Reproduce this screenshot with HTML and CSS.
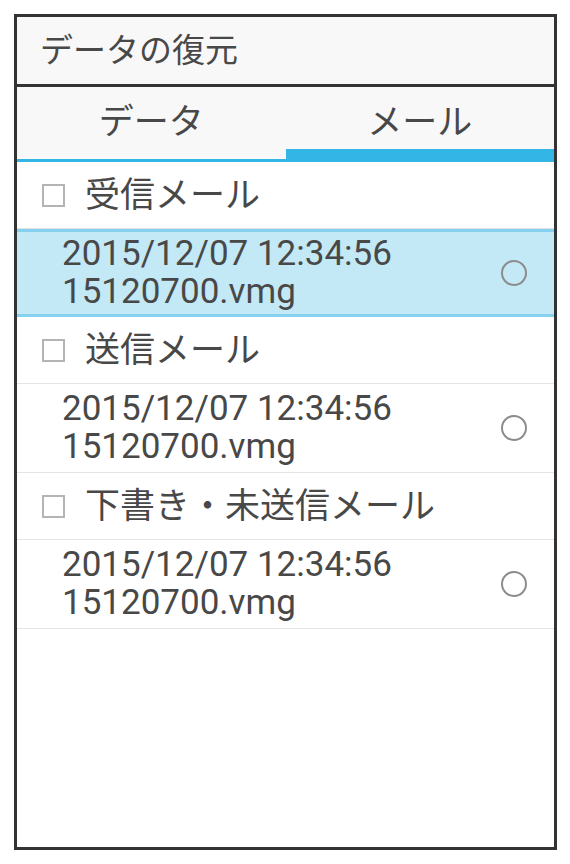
FILE: index.html
```html
<!DOCTYPE html>
<html lang="ja">
<head>
    <meta charset="UTF-8">
    <meta name="viewport" content="width=device-width, initial-scale=1.0">
    <title>データの復元</title>
    <link rel="stylesheet" href="styles.css">
</head>
<body>
    <div class="frame">
        <header class="title-bar">
            <h1>データの復元</h1>
        </header>
        <nav class="tabs">
            <div class="tab">データ</div>
            <div class="tab active">メール</div>
        </nav>
        <main class="list">
            <div class="section">
                <span class="checkbox"></span>
                <span class="section-label">受信メール</span>
            </div>
            <div class="item selected">
                <div class="item-text">
                    <div>2015/12/07 12:34:56</div>
                    <div>15120700.vmg</div>
                </div>
                <span class="radio"></span>
            </div>
            <div class="section">
                <span class="checkbox"></span>
                <span class="section-label">送信メール</span>
            </div>
            <div class="item">
                <div class="item-text">
                    <div>2015/12/07 12:34:56</div>
                    <div>15120700.vmg</div>
                </div>
                <span class="radio"></span>
            </div>
            <div class="section">
                <span class="checkbox"></span>
                <span class="section-label">下書き・未送信メール</span>
            </div>
            <div class="item">
                <div class="item-text">
                    <div>2015/12/07 12:34:56</div>
                    <div>15120700.vmg</div>
                </div>
                <span class="radio"></span>
            </div>
        </main>
    </div>
</body>
</html>
```

FILE: styles.css
```css
* {
    box-sizing: border-box;
}

body {
    margin: 0;
    padding: 0;
    background-color: #fff;
    font-family: Roboto, "Noto Sans CJK JP", sans-serif;
    color: #484848;
}

.frame {
    margin: 14px 0 0 14px;
    width: 543px;
    height: 836px;
    border: 3px solid #333;
    background-color: #fff;
    display: flex;
    flex-direction: column;
}

.title-bar {
    height: 70px;
    background-color: #f8f8f8;
    border-bottom: 3px solid #333;
    display: flex;
    align-items: center;
    padding-left: 23px;
}

.title-bar h1 {
    margin: 0;
    font-size: 33px;
    font-weight: normal;
    line-height: 1;
}

.tabs {
    display: flex;
    height: 75px;
    background-color: #f8f8f8;
}

.tab {
    flex: 1;
    text-align: center;
    font-size: 35px;
    line-height: 35px;
    padding-top: 18px;
    border-bottom: 3px solid #33b5e5;
}

.tab.active {
    border-bottom-width: 13px;
}

.list {
    flex: 1;
}

.section {
    height: 67px;
    display: flex;
    align-items: center;
    padding-left: 25px;
    border-bottom: 1px solid #e4e4e4;
}

.checkbox {
    width: 23px;
    height: 23px;
    border: 2px solid #b4b4b4;
    background-color: #fff;
    margin-right: 20px;
}

.section-label {
    font-size: 35px;
    line-height: 35px;
}

.item {
    height: 89px;
    display: flex;
    align-items: center;
    justify-content: space-between;
    padding: 0 27px 0 45px;
    border-bottom: 1px solid #e4e4e4;
}

.item.selected {
    height: 88px;
    background-color: #c3e8f6;
    border-top: 3px solid #85d1ef;
    border-bottom: 3px solid #85d1ef;
}

.item-text {
    font-size: 35px;
    line-height: 38px;
}

.radio {
    width: 26px;
    height: 26px;
    border: 2px solid #8c8c8c;
    border-radius: 50%;
}
```
